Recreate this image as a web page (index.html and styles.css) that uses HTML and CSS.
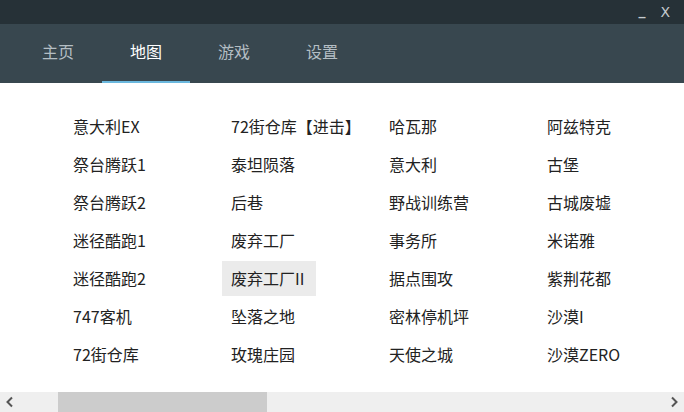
FILE: index.html
```html
<!DOCTYPE html>
<html lang="zh">
<head>
<meta charset="utf-8">
<link rel="stylesheet" href="styles.css">
</head>
<body>
<div class="app">
  <div class="titlebar">
    <span class="win-btn min">_</span>
    <span class="win-btn close">X</span>
  </div>
  <nav class="tabs">
    <div class="tab">主页</div>
    <div class="tab active">地图</div>
    <div class="tab">游戏</div>
    <div class="tab">设置</div>
  </nav>
  <main class="content">
    <div class="grid">
      <div class="item">意大利EX</div>
      <div class="item">72街仓库【进击】</div>
      <div class="item">哈瓦那</div>
      <div class="item">阿兹特克</div>
      <div class="item">祭台腾跃1</div>
      <div class="item">泰坦陨落</div>
      <div class="item">意大利</div>
      <div class="item">古堡</div>
      <div class="item">祭台腾跃2</div>
      <div class="item">后巷</div>
      <div class="item">野战训练营</div>
      <div class="item">古城废墟</div>
      <div class="item">迷径酷跑1</div>
      <div class="item">废弃工厂</div>
      <div class="item">事务所</div>
      <div class="item">米诺雅</div>
      <div class="item">迷径酷跑2</div>
      <div class="item hover">废弃工厂II</div>
      <div class="item">据点围攻</div>
      <div class="item">紫荆花都</div>
      <div class="item">747客机</div>
      <div class="item">坠落之地</div>
      <div class="item">密林停机坪</div>
      <div class="item">沙漠I</div>
      <div class="item">72街仓库</div>
      <div class="item">玫瑰庄园</div>
      <div class="item">天使之城</div>
      <div class="item">沙漠ZERO</div>
    </div>
  </main>
  <div class="hscroll">
    <div class="arrow">
      <svg width="10" height="12" viewBox="0 0 10 12"><path d="M7 1.5 L2.5 6 L7 10.5" fill="none" stroke="#555" stroke-width="2"/></svg>
    </div>
    <div class="track">
      <div class="thumb"></div>
    </div>
    <div class="arrow">
      <svg width="10" height="12" viewBox="0 0 10 12"><path d="M3 1.5 L7.5 6 L3 10.5" fill="none" stroke="#555" stroke-width="2"/></svg>
    </div>
  </div>
</div>
</body>
</html>
```

FILE: styles.css
```css
* { box-sizing: border-box; }
html, body {
  margin: 0;
  padding: 0;
  width: 684px;
  height: 412px;
  overflow: hidden;
  background: #ffffff;
  font-family: "Noto Sans CJK SC", "Noto Sans", sans-serif;
}
.app {
  display: flex;
  flex-direction: column;
  height: 412px;
}
.titlebar {
  height: 24px;
  background: #263137;
  display: flex;
  justify-content: flex-end;
  align-items: center;
  gap: 15px;
  padding-right: 14px;
  color: #c5cbcf;
  font-family: "DejaVu Sans", sans-serif;
  font-size: 14px;
}
.win-btn { line-height: 1; }
.win-btn.min { margin-top: -4px; font-weight: bold; }
.tabs {
  height: 59px;
  background: #38474f;
  display: flex;
  padding-left: 14px;
}
.tab {
  width: 88px;
  display: flex;
  align-items: center;
  justify-content: center;
  font-size: 16px;
  color: #b4bec4;
  border-bottom: 2px solid transparent;
  padding-bottom: 3px;
}
.tab.active {
  color: #ffffff;
  border-bottom-color: #6bb8de;
}
.content {
  flex: 1;
  padding: 26px 0 0 64px;
}
.grid {
  display: grid;
  grid-template-columns: repeat(4, 158px);
  grid-auto-rows: 35px;
  row-gap: 3px;
}
.item {
  justify-self: start;
  height: 35px;
  line-height: 35px;
  padding: 0 9px;
  font-size: 16px;
  color: #222222;
  white-space: nowrap;
}
.item.hover { background: #ebebeb; padding-right: 12px; }
.hscroll {
  height: 20px;
  background: #efefef;
  display: flex;
  align-items: stretch;
}
.arrow {
  width: 20px;
  display: flex;
  align-items: center;
  justify-content: center;
}
.track {
  flex: 1;
  padding-left: 38px;
  display: flex;
}
.thumb {
  width: 209px;
  background: #cccccc;
}
```
